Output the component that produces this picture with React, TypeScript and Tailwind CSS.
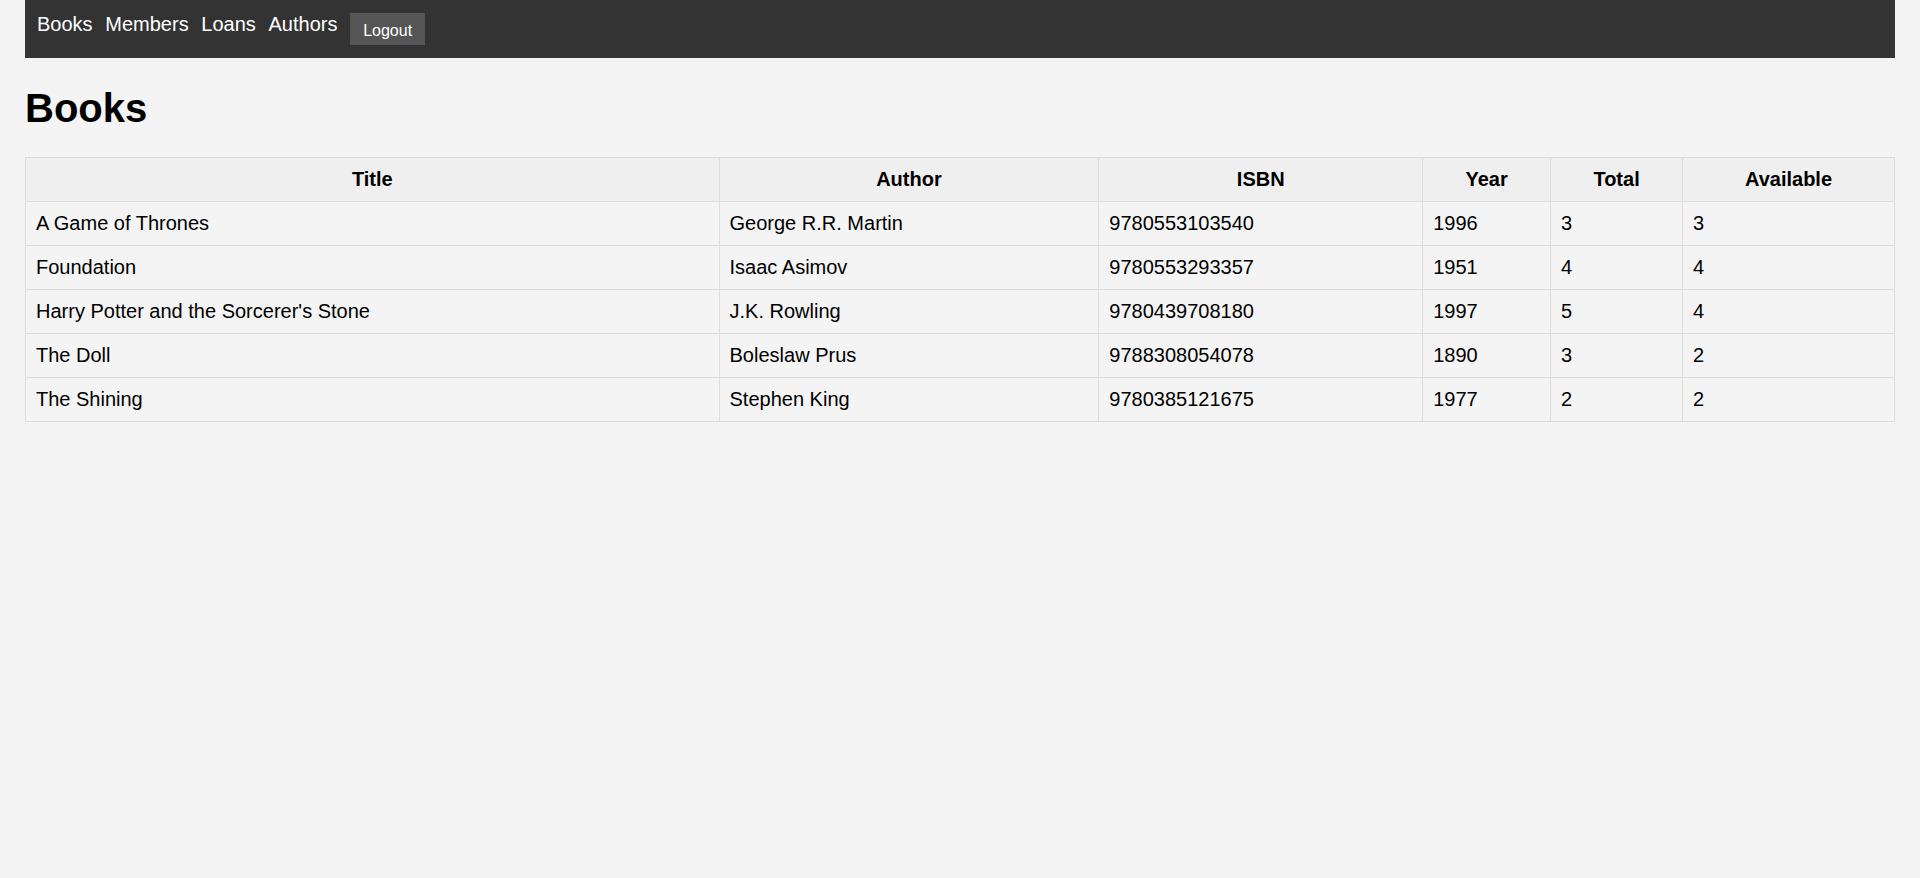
import React from 'react';

interface Book {
  title: string;
  author: string;
  isbn: string;
  year: number;
  total: number;
  available: number;
}

const books: Book[] = [
  { title: 'A Game of Thrones', author: 'George R.R. Martin', isbn: '9780553103540', year: 1996, total: 3, available: 3 },
  { title: 'Foundation', author: 'Isaac Asimov', isbn: '9780553293357', year: 1951, total: 4, available: 4 },
  { title: "Harry Potter and the Sorcerer's Stone", author: 'J.K. Rowling', isbn: '9780439708180', year: 1997, total: 5, available: 4 },
  { title: 'The Doll', author: 'Boleslaw Prus', isbn: '9788308054078', year: 1890, total: 3, available: 2 },
  { title: 'The Shining', author: 'Stephen King', isbn: '9780385121675', year: 1977, total: 2, available: 2 },
];

const cell = 'border border-[#dddddd] px-[10px] py-[10px] text-left font-normal';
const head = 'border border-[#dddddd] px-[10px] py-[10px] text-center font-bold bg-[#efefef]';

export default function App() {
  return (
    <div className="min-h-screen bg-[#f4f4f4] px-[25px] text-black font-['Liberation_Sans',Arial,sans-serif]">
      <nav className="flex items-start gap-[12.7px] bg-[#333333] h-[58px] pl-[12px] pt-[13px]">
        <a href="#" className="text-[20px] leading-[23px] text-white">Books</a>
        <a href="#" className="text-[20px] leading-[23px] text-white">Members</a>
        <a href="#" className="text-[20px] leading-[23px] text-white">Loans</a>
        <a href="#" className="text-[20px] leading-[23px] text-white">Authors</a>
        <button className="h-[32px] w-[75px] bg-[#555555] text-white text-[16px] pt-[3px]">
          Logout
        </button>
      </nav>

      <h1 className="text-[40px] leading-[46px] font-bold mt-[27px] mb-[26px]">Books</h1>

      <table className="w-full border-collapse text-[20px] leading-[23px]">
        <thead>
          <tr>
            <th className={`${head} w-[694px]`}>Title</th>
            <th className={`${head} w-[380px]`}>Author</th>
            <th className={`${head} w-[324px]`}>ISBN</th>
            <th className={`${head} w-[128px]`}>Year</th>
            <th className={`${head} w-[132px]`}>Total</th>
            <th className={`${head} w-[212px]`}>Available</th>
          </tr>
        </thead>
        <tbody>
          {books.map((b) => (
            <tr key={b.isbn}>
              <td className={cell}>{b.title}</td>
              <td className={cell}>{b.author}</td>
              <td className={cell}>{b.isbn}</td>
              <td className={cell}>{b.year}</td>
              <td className={cell}>{b.total}</td>
              <td className={cell}>{b.available}</td>
            </tr>
          ))}
        </tbody>
      </table>
    </div>
  );
}
